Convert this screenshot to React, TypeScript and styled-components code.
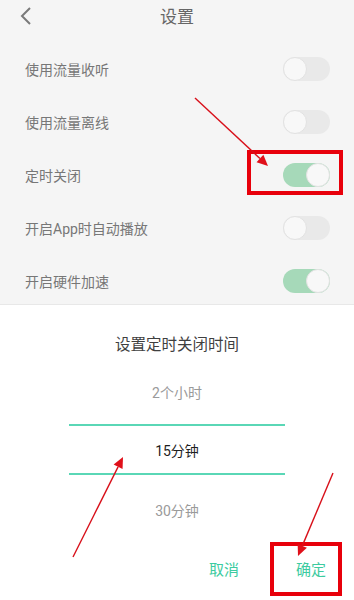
import React from 'react'
import styled, { createGlobalStyle } from 'styled-components'

const GlobalStyle = createGlobalStyle`
  html, body {
    margin: 0;
    padding: 0;
    background: #ffffff;
    font-family: Roboto, "Noto Sans CJK SC", sans-serif;
  }
`

const Page = styled.div`
  position: relative;
  width: 354px;
  height: 600px;
  overflow: hidden;
  display: flex;
  flex-direction: column;
`

const Settings = styled.div`
  background: #f5f5f5;
  height: 305px;
  border-bottom: 1px solid #e8e8e8;
  box-sizing: border-box;
`

const Header = styled.div`
  height: 42px;
  display: flex;
  align-items: flex-start;
  justify-content: center;
  position: relative;
`

const BackButton = styled.div`
  position: absolute;
  left: 18px;
  top: 6px;
  width: 16px;
  height: 20px;
  display: flex;
`

const Title = styled.div`
  font-size: 17px;
  line-height: 34px;
  color: #666;
`

const Row = styled.div`
  height: 53px;
  display: flex;
  align-items: center;
  justify-content: space-between;
  padding: 0 24px 0 25px;
`

const Label = styled.span`
  font-size: 14px;
  color: #777;
`

const Switch = styled.div<{ $on?: boolean }>`
  width: 47px;
  height: 24px;
  border-radius: 12px;
  background: ${p => (p.$on ? '#a6d9b9' : '#e9e9e9')};
  display: flex;
  justify-content: ${p => (p.$on ? 'flex-end' : 'flex-start')};
`

const Thumb = styled.div`
  width: 24px;
  height: 24px;
  border-radius: 50%;
  background: #f8f8f8;
  box-sizing: border-box;
  border: 1px solid #e2e2e2;
`

const Dialog = styled.div`
  flex: 1;
  background: #fff;
  display: flex;
  flex-direction: column;
  align-items: center;
`

const DialogTitle = styled.div`
  margin-top: 29px;
  font-size: 15.5px;
  line-height: 22px;
  color: #3f3f3f;
`

const Picker = styled.div`
  margin-top: 16px;
  width: 216px;
  display: flex;
  flex-direction: column;
  align-items: center;
`

const Option = styled.div`
  height: 40px;
  display: flex;
  align-items: center;
  justify-content: center;
  font-size: 14px;
  color: #9a9a9a;
`

const Selected = styled.div`
  width: 100%;
  height: 51px;
  box-sizing: border-box;
  border-top: 2px solid #5ad7b6;
  border-bottom: 2px solid #5ad7b6;
  display: flex;
  align-items: center;
  justify-content: center;
  margin: 12px 0 15px;
  font-size: 14px;
  color: #1e1e1e;
`

const Actions = styled.div`
  align-self: stretch;
  display: flex;
  justify-content: flex-end;
  gap: 57px;
  padding: 29px 28px 0 0;
`

const ActionButton = styled.span`
  font-size: 15px;
  line-height: 22px;
  color: #3dcba0;
`

const Highlight = styled.div`
  position: absolute;
  border: 4px solid #e8000b;
  box-sizing: border-box;
`

const Arrows = styled.svg`
  position: absolute;
  left: 0;
  top: 0;
  pointer-events: none;
`

const Arrow: React.FC<{ x1: number; y1: number; x2: number; y2: number }> = ({ x1, y1, x2, y2 }) => {
  const a = Math.atan2(y2 - y1, x2 - x1)
  const len = 11
  const w = 5
  const bx = x2 - len * Math.cos(a)
  const by = y2 - len * Math.sin(a)
  const px = -Math.sin(a) * w
  const py = Math.cos(a) * w
  return (
    <g>
      <line x1={x1} y1={y1} x2={bx} y2={by} stroke="#d8101a" strokeWidth="1.4" />
      <polygon points={`${x2},${y2} ${bx + px},${by + py} ${bx - px},${by - py}`} fill="#e0101a" />
    </g>
  )
}

const rows = [
  { label: '使用流量收听', on: false },
  { label: '使用流量离线', on: false },
  { label: '定时关闭', on: true },
  { label: '开启App时自动播放', on: false },
  { label: '开启硬件加速', on: true },
]

const App: React.FC = () => {
  return (
    <Page>
      <GlobalStyle />
      <Settings>
        <Header>
          <BackButton>
            <svg width="16" height="20" viewBox="0 0 16 20">
              <path d="M12 2 L4 10 L12 18" fill="none" stroke="#7a7a7a" strokeWidth="2" />
            </svg>
          </BackButton>
          <Title>设置</Title>
        </Header>
        {rows.map(r => (
          <Row key={r.label}>
            <Label>{r.label}</Label>
            <Switch $on={r.on}>
              <Thumb />
            </Switch>
          </Row>
        ))}
      </Settings>
      <Dialog>
        <DialogTitle>设置定时关闭时间</DialogTitle>
        <Picker>
          <Option>2个小时</Option>
          <Selected>15分钟</Selected>
          <Option>30分钟</Option>
        </Picker>
        <Actions>
          <ActionButton>取消</ActionButton>
          <ActionButton>确定</ActionButton>
        </Actions>
      </Dialog>
      <Highlight style={{ left: 247, top: 150, width: 96, height: 45 }} />
      <Highlight style={{ left: 270, top: 542, width: 72, height: 54 }} />
      <Arrows width="354" height="600" viewBox="0 0 354 600">
        <Arrow x1={195} y1={98} x2={268} y2={166} />
        <Arrow x1={73} y1={557} x2={123} y2={457} />
        <Arrow x1={333} y1={473} x2={298} y2={556} />
      </Arrows>
    </Page>
  )
}

export default App
